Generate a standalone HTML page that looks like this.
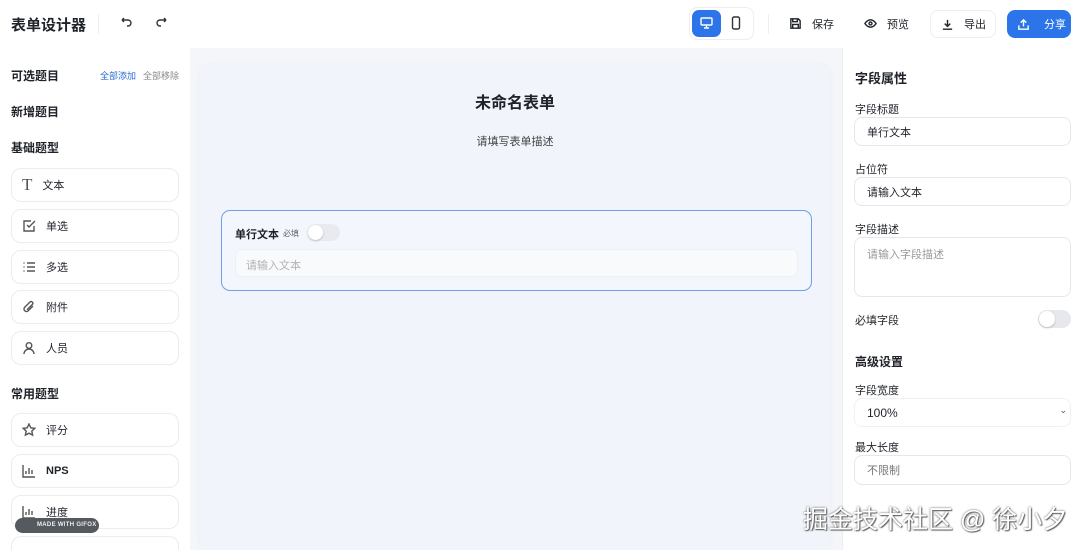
<!DOCTYPE html>
<html style="overflow:hidden;width:1080px;height:550px"><head><meta charset="utf-8"><style>
*{box-sizing:border-box;margin:0;padding:0}
body{width:1080px;height:550px;overflow:hidden;background:#fff;font-family:"Liberation Sans","Noto Sans CJK SC",sans-serif;color:#1f2329;position:relative}
.a{position:absolute}
.item{position:absolute;left:11px;width:168px;height:34px;border:1px solid #ececf0;border-radius:10px;background:#fff;font-size:11px;display:flex;align-items:center;padding-left:10px}
.item svg{width:14px;height:14px;margin-right:10px;stroke:#555;fill:none;stroke-width:1.4}
.btn{position:absolute;top:10px;height:27px;display:flex;align-items:center;font-size:11px;gap:10px;padding:0 10px;border-radius:8px;white-space:nowrap}
.btn svg{width:13px;height:13px;fill:none;stroke:currentColor;stroke-width:1.5;flex:none}
.inp{position:absolute;left:854px;width:217px;border:1px solid #e6e7ec;border-radius:8px;font-size:11px;padding-left:12px;display:flex;align-items:center}
.lbl{position:absolute;left:855px;font-size:11px}
</style></head><body>
<div class="a" style="left:11px;top:14px;font-size:15px;font-weight:bold">表单设计器</div>
<div class="a" style="left:98px;top:14px;width:1px;height:20px;background:#eee"></div>
<svg class="a" style="left:119px;top:17px" width="14" height="12" viewBox="0 0 14 12" fill="none" stroke="#333" stroke-width="1.4"><path d="M3 3h6a3 3 0 0 1 0 6H8M3 3l2-2M3 3l2 2"/></svg>
<svg class="a" style="left:155px;top:17px" width="14" height="12" viewBox="0 0 14 12" fill="none" stroke="#333" stroke-width="1.4"><path d="M11 3H5a3 3 0 0 0 0 6h1M11 3L9 1M11 3L9 5"/></svg>
<div class="a" style="left:689px;top:7px;width:65px;height:33px;border:1px solid #eee;border-radius:8px"></div>
<div class="a" style="left:692px;top:10px;width:29px;height:27px;background:#2b74ea;border-radius:7px"></div>
<svg class="a" style="left:700px;top:17px" width="13" height="12" viewBox="0 0 13 12" fill="none" stroke="#fff" stroke-width="1.4"><rect x="1" y="1" width="11" height="7" rx="1"/><path d="M6.5 8v3M4 11h5"/></svg>
<svg class="a" style="left:731px;top:16px" width="10" height="14" viewBox="0 0 10 14" fill="none" stroke="#333" stroke-width="1.4"><rect x="1.5" y="1" width="7" height="12" rx="1.5"/></svg>
<div class="a" style="left:768px;top:14px;width:1px;height:20px;background:#eee"></div>
<div class="btn" style="left:779px"><svg viewBox="0 0 14 14"><path d="M2 2h8l2 2v8H2z M4 2v3h5V2 M4 12V8h6v4"/></svg>保存</div>
<div class="btn" style="left:854px"><svg viewBox="0 0 14 14"><path d="M1 7s2.5-4 6-4 6 4 6 4-2.5 4-6 4-6-4-6-4z"/><circle cx="7" cy="7" r="1.6"/></svg>预览</div>
<div class="btn" style="left:930px;border:1px solid #eee;height:28px;width:66px"><svg viewBox="0 0 14 14"><path d="M7 2v7M4 6l3 3 3-3M2 12h10"/></svg>导出</div>
<div class="btn" style="left:1007px;background:#2b74ea;color:#fff;width:64px;height:28px;gap:14px"><svg viewBox="0 0 14 14"><path d="M7 9V2M4 5l3-3 3 3M2 8v4h10V8"/></svg>分享</div>

<div class="a" style="left:11px;top:67px;font-size:12px;font-weight:bold">可选题目</div>
<div class="a" style="left:100px;top:69px;font-size:9px;color:#2b6cd0">全部添加</div>
<div class="a" style="left:143px;top:69px;font-size:9px;color:#888">全部移除</div>
<div class="a" style="left:11px;top:103px;font-size:12px;font-weight:bold">新增题目</div>
<div class="a" style="left:11px;top:139px;font-size:12px;font-weight:bold">基础题型</div>
<div class="item" style="top:168px"><span style="font-family:'Liberation Serif';font-size:17px;margin-right:10px;color:#555">T</span>文本</div>
<div class="item" style="top:209px"><svg viewBox="0 0 14 14"><path d="M12 7v5H2V2h7M5 6l2 2 6-6"/></svg>单选</div>
<div class="item" style="top:250px"><svg viewBox="0 0 14 14"><path d="M5 3h8M5 7h8M5 11h8M1.5 3h1M1.5 7h1M1.5 11h1"/></svg>多选</div>
<div class="item" style="top:290px"><svg viewBox="0 0 14 14"><path d="M11 6l-5 5a2.5 2.5 0 0 1-3.5-3.5L8 2a1.7 1.7 0 0 1 2.4 2.4L5 9.7"/></svg>附件</div>
<div class="item" style="top:331px"><svg viewBox="0 0 14 14"><circle cx="7" cy="4.5" r="2.8"/><path d="M2 13a5 5 0 0 1 10 0"/></svg>人员</div>
<div class="a" style="left:11px;top:385px;font-size:12px;font-weight:bold">常用题型</div>
<div class="item" style="top:413px"><svg viewBox="0 0 14 14"><path d="M7 1l1.8 3.8 4 .5-3 2.8.8 4L7 10.2 3.4 12.1l.8-4-3-2.8 4-.5z"/></svg>评分</div>
<div class="item" style="top:454px;font-weight:bold"><svg viewBox="0 0 14 14"><path d="M1 1v12h12M4 10V7M7 10V4M10 10V6"/></svg>NPS</div>
<div class="item" style="top:495px"><svg viewBox="0 0 14 14"><path d="M1 1v12h12M4 10V7M7 10V4M10 10V6"/></svg>进度</div>
<div class="item" style="top:536px;height:14px;border-bottom:none;border-radius:10px 10px 0 0"></div>
<div class="a" style="left:15px;top:518px;width:84px;height:15px;border-radius:8px;background:#555a60;color:#eee;font-size:6px;font-weight:bold;line-height:15px;padding-left:22px;letter-spacing:.3px;white-space:nowrap">MADE WITH GIFOX</div>

<div class="a" style="left:190px;top:48px;width:652px;height:502px;background:#f4f6fa"></div>
<div class="a" style="left:200px;top:65px;width:630px;height:485px;background:#f1f4fa;border-radius:10px;box-shadow:0 0 8px rgba(0,0,0,.04)"></div>
<div class="a" style="left:200px;top:89px;width:630px;text-align:center;font-size:16px;font-weight:bold">未命名表单</div>
<div class="a" style="left:200px;top:133px;width:630px;text-align:center;font-size:11px;color:#444">请填写表单描述</div>
<div class="a" style="left:221px;top:210px;width:591px;height:81px;border:1.5px solid #6ba1e6;border-radius:9px;background:#f3f7fd"></div>
<div class="a" style="left:235px;top:226px;font-size:11px;font-weight:bold">单行文本</div>
<div class="a" style="left:283px;top:228px;font-size:8px;color:#666">必填</div>
<div class="a" style="left:307px;top:224px;width:33px;height:17px;border-radius:9px;background:#e8eaef"></div>
<div class="a" style="left:308px;top:225px;width:15px;height:15px;border-radius:50%;background:#fff;box-shadow:0 1px 2px rgba(0,0,0,.2)"></div>
<div class="a" style="left:235px;top:249px;width:563px;height:28px;border-radius:6px;background:#f9fafc;border:1px solid #eef0f4;font-size:11px;color:#b0b3b8;padding:7px 10px">请输入文本</div>

<div class="a" style="left:842px;top:48px;width:1px;height:502px;background:#eceef2"></div>
<div class="a" style="left:855px;top:68px;font-size:13px;font-weight:bold">字段属性</div>
<div class="lbl" style="top:101px">字段标题</div>
<div class="inp" style="top:117px;height:29px">单行文本</div>
<div class="lbl" style="top:161px">占位符</div>
<div class="inp" style="top:177px;height:29px">请输入文本</div>
<div class="lbl" style="top:221px">字段描述</div>
<div class="inp" style="top:237px;height:60px;align-items:flex-start;padding-top:8px;color:#999">请输入字段描述</div>
<div class="lbl" style="top:312px">必填字段</div>
<div class="a" style="left:1038px;top:310px;width:33px;height:18px;border-radius:9px;background:#e6e8ed"></div>
<div class="a" style="left:1039px;top:311px;width:16px;height:16px;border-radius:50%;background:#fff;box-shadow:0 1px 2px rgba(0,0,0,.2)"></div>
<div class="a" style="left:855px;top:353px;font-size:12px;font-weight:bold">高级设置</div>
<div class="lbl" style="top:382px">字段宽度</div>
<div class="inp" style="top:398px;height:29px;border-color:#f0f1f4;font-size:12px">100%<span style="position:absolute;right:3px;top:6px;font-size:9px;color:#555">⌄</span></div>
<div class="lbl" style="top:439px">最大长度</div>
<div class="inp" style="top:455px;height:30px;color:#777">不限制</div>
<div class="a" style="left:803px;top:500px;font-size:25px;color:#fff;white-space:nowrap;text-shadow:0 0 2px #555,1px 1px 1px #666">掘金技术社区 @ 徐小夕</div>
</body></html>
